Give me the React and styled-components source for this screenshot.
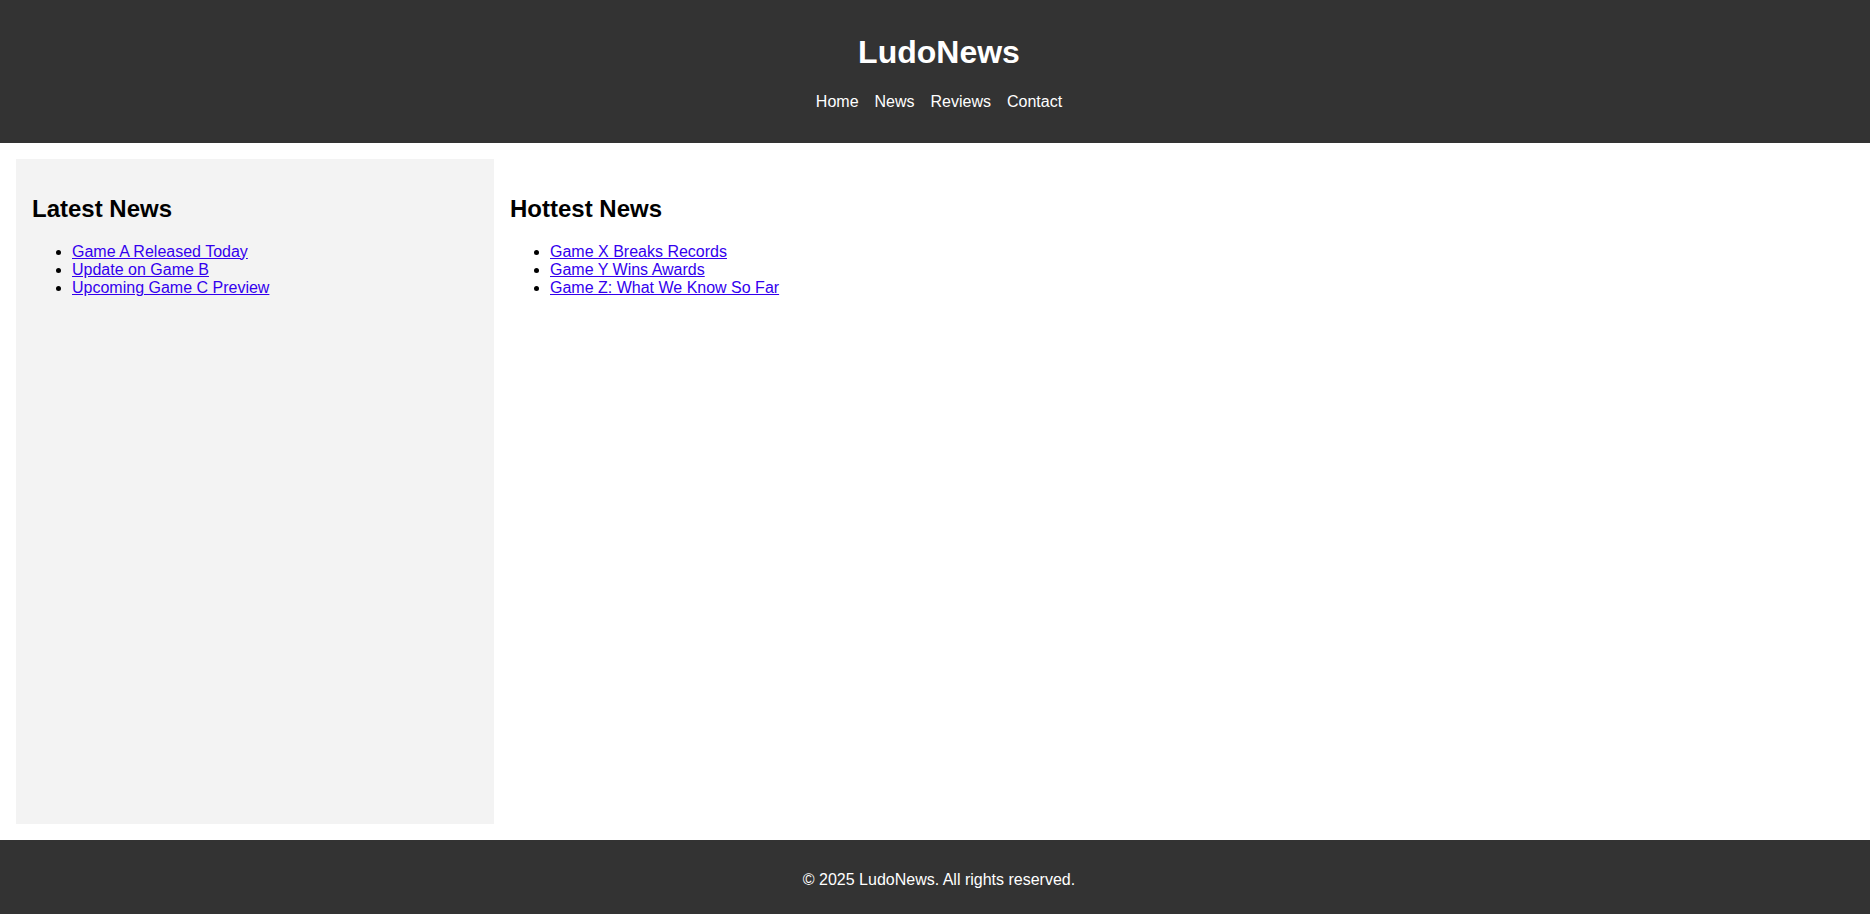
import React from 'react';
import styled, { createGlobalStyle } from 'styled-components';

const GlobalStyle = createGlobalStyle`
  html, body {
    margin: 0;
    padding: 0;
  }
  body {
    font-family: "Liberation Sans", Arial, sans-serif;
    font-size: 16px;
    color: #000;
    background: #fff;
  }
`;

const Page = styled.div`
  display: flex;
  flex-direction: column;
  min-height: 100vh;
`;

const Header = styled.header`
  background-color: #333;
  color: #fff;
  text-align: center;
  padding: 13px 0 16px 8px;
`;

const Title = styled.h1`
  margin: 21.44px 0;
  font-size: 32px;
  font-weight: bold;
`;

const NavList = styled.ul`
  display: flex;
  justify-content: center;
  gap: 16px;
  list-style: none;
  margin: 16px 0;
  padding: 0;
`;

const NavLink = styled.a`
  color: #fff;
  text-decoration: none;
`;

const Main = styled.main`
  flex: 1;
  display: flex;
  padding: 16px;
`;

const Section = styled.section`
  box-sizing: border-box;
  padding: 16px;
  background-color: ${({ $shaded }) => ($shaded ? '#f3f3f3' : 'transparent')};
  ${({ $width }) => ($width ? `width: ${$width}px; flex-shrink: 0;` : 'flex: 1;')}
`;

const Heading = styled.h2`
  margin: 19.92px 0;
  font-size: 24px;
  font-weight: bold;
`;

const NewsList = styled.ul`
  margin: 16px 0;
  padding-left: 40px;
`;

const NewsLink = styled.a`
  color: #3300ee;
  text-decoration: underline;
`;

const Footer = styled.footer`
  background-color: #333;
  color: #fff;
  text-align: center;
  padding: 31px 0 25px 8px;

  p {
    margin: 0;
  }
`;

const latest = ['Game A Released Today', 'Update on Game B', 'Upcoming Game C Preview'];
const hottest = ['Game X Breaks Records', 'Game Y Wins Awards', 'Game Z: What We Know So Far'];

const NewsBlock = ({ title, items, ...rest }) => (
  <Section {...rest}>
    <Heading>{title}</Heading>
    <NewsList>
      {items.map((item) => (
        <li key={item}>
          <NewsLink href="#">{item}</NewsLink>
        </li>
      ))}
    </NewsList>
  </Section>
);

export default function App() {
  return (
    <>
      <GlobalStyle />
      <Page>
        <Header>
          <Title>LudoNews</Title>
          <nav>
            <NavList>
              {['Home', 'News', 'Reviews', 'Contact'].map((label) => (
                <li key={label}>
                  <NavLink href="#">{label}</NavLink>
                </li>
              ))}
            </NavList>
          </nav>
        </Header>
        <Main>
          <NewsBlock title="Latest News" items={latest} $shaded $width={478} />
          <NewsBlock title="Hottest News" items={hottest} />
        </Main>
        <Footer>
          <p>&copy; 2025 LudoNews. All rights reserved.</p>
        </Footer>
      </Page>
    </>
  );
}
